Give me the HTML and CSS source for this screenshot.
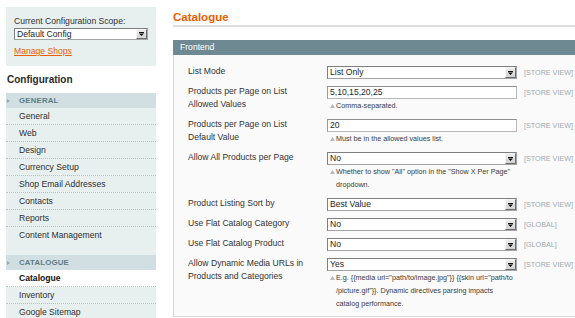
FILE: index.html
```html
<!DOCTYPE html>
<html>
<head>
<meta charset="utf-8">
<link rel="stylesheet" href="styles.css">
</head>
<body>
<div class="page">
  <aside class="side">
    <div class="scope-box">
      <div class="scope-label">Current Configuration Scope:</div>
      <div class="select side-select"><span class="sel-text">Default Config</span><span class="sel-btn"><svg width="5" height="4" viewBox="0 0 5 4"><rect x="0" y="0" width="5" height="1" fill="#111"/><path d="M0 1.5h5l-2.5 2.5z" fill="#111"/></svg></span></div>
      <a class="manage" href="#">Manage Shops</a>
    </div>
    <h3 class="side-title">Configuration</h3>
    <div class="group">
      <div class="group-head"><span class="tri"></span>GENERAL</div>
      <ul class="items">
        <li>General</li>
        <li>Web</li>
        <li>Design</li>
        <li>Currency Setup</li>
        <li>Shop Email Addresses</li>
        <li>Contacts</li>
        <li>Reports</li>
        <li>Content Management</li>
      </ul>
    </div>
    <div class="group">
      <div class="group-head"><span class="tri"></span>CATALOGUE</div>
      <ul class="items">
        <li class="active">Catalogue</li>
        <li>Inventory</li>
        <li>Google Sitemap</li>
      </ul>
    </div>
  </aside>

  <main class="main">
    <h2 class="page-title">Catalogue</h2>
    <div class="section-head">Frontend</div>
    <div class="fieldset">
      <div class="row">
        <div class="label">List Mode</div>
        <div class="value"><div class="select"><span class="sel-text">List Only</span><span class="sel-btn"><svg width="5" height="4" viewBox="0 0 5 4"><rect x="0" y="0" width="5" height="1" fill="#111"/><path d="M0 1.5h5l-2.5 2.5z" fill="#111"/></svg></span></div></div>
        <div class="scope">[STORE VIEW]</div>
      </div>
      <div class="row">
        <div class="label">Products per Page on List Allowed Values</div>
        <div class="value"><div class="input">5,10,15,20,25</div><p class="note"><svg class="ni" width="5" height="4" viewBox="0 0 5 4"><path d="M2.5 0L5 4H0z" fill="#b9b9b9"/></svg>Comma-separated.</p></div>
        <div class="scope">[STORE VIEW]</div>
      </div>
      <div class="row">
        <div class="label">Products per Page on List Default Value</div>
        <div class="value"><div class="input">20</div><p class="note"><svg class="ni" width="5" height="4" viewBox="0 0 5 4"><path d="M2.5 0L5 4H0z" fill="#b9b9b9"/></svg>Must be in the allowed values list.</p></div>
        <div class="scope">[STORE VIEW]</div>
      </div>
      <div class="row">
        <div class="label">Allow All Products per Page</div>
        <div class="value"><div class="select"><span class="sel-text">No</span><span class="sel-btn"><svg width="5" height="4" viewBox="0 0 5 4"><rect x="0" y="0" width="5" height="1" fill="#111"/><path d="M0 1.5h5l-2.5 2.5z" fill="#111"/></svg></span></div><p class="note"><svg class="ni" width="5" height="4" viewBox="0 0 5 4"><path d="M2.5 0L5 4H0z" fill="#b9b9b9"/></svg>Whether to show "All" option in the "Show X Per Page" dropdown.</p></div>
        <div class="scope">[STORE VIEW]</div>
      </div>
      <div class="row">
        <div class="label">Product Listing Sort by</div>
        <div class="value"><div class="select"><span class="sel-text">Best Value</span><span class="sel-btn"><svg width="5" height="4" viewBox="0 0 5 4"><rect x="0" y="0" width="5" height="1" fill="#111"/><path d="M0 1.5h5l-2.5 2.5z" fill="#111"/></svg></span></div></div>
        <div class="scope">[STORE VIEW]</div>
      </div>
      <div class="row">
        <div class="label">Use Flat Catalog Category</div>
        <div class="value"><div class="select"><span class="sel-text">No</span><span class="sel-btn"><svg width="5" height="4" viewBox="0 0 5 4"><rect x="0" y="0" width="5" height="1" fill="#111"/><path d="M0 1.5h5l-2.5 2.5z" fill="#111"/></svg></span></div></div>
        <div class="scope">[GLOBAL]</div>
      </div>
      <div class="row">
        <div class="label">Use Flat Catalog Product</div>
        <div class="value"><div class="select"><span class="sel-text">No</span><span class="sel-btn"><svg width="5" height="4" viewBox="0 0 5 4"><rect x="0" y="0" width="5" height="1" fill="#111"/><path d="M0 1.5h5l-2.5 2.5z" fill="#111"/></svg></span></div></div>
        <div class="scope">[GLOBAL]</div>
      </div>
      <div class="row">
        <div class="label">Allow Dynamic Media URLs in Products and Categories</div>
        <div class="value"><div class="select"><span class="sel-text">Yes</span><span class="sel-btn"><svg width="5" height="4" viewBox="0 0 5 4"><rect x="0" y="0" width="5" height="1" fill="#111"/><path d="M0 1.5h5l-2.5 2.5z" fill="#111"/></svg></span></div><p class="note"><svg class="ni" width="5" height="4" viewBox="0 0 5 4"><path d="M2.5 0L5 4H0z" fill="#b9b9b9"/></svg>E.g. {{media url="path/to/image.jpg"}} {{skin url="path/to<wbr>/picture.gif"}}. Dynamic directives parsing impacts catalog performance.</p></div>
        <div class="scope">[STORE VIEW]</div>
      </div>
    </div>
  </main>
</div>
</body>
</html>
```

FILE: styles.css
```css
* { box-sizing: border-box; }
html, body { margin: 0; padding: 0; }
body {
  width: 575px;
  height: 318px;
  overflow: hidden;
  background: #fff;
  font-family: "Liberation Sans", Arial, sans-serif;
  font-size: 8.6px;
  color: #2f2f2f;
}
.page {
  display: flex;
  gap: 17px;
  padding: 7px 0 0 6px;
  width: max-content;
}

/* sidebar */
.side {
  width: 150px;
  flex: none;
}
.scope-box {
  background: #e7efef;
  padding: 9px 8px 9px 8px;
  height: 59px;
}
.scope-label {
  line-height: 11px;
  color: #333;
}
.select {
  display: flex;
  align-items: center;
  height: 13px;
  background: #fff;
  border: 1px solid #a3a3a3;
  border-top-color: #7f7f7f;
  border-left-color: #7f7f7f;
  padding: 0 0 0 2px;
  color: #1e1e1e;
}
.side-select {
  margin-top: 1px;
  height: 12px;
  width: 134px;
}
.sel-text {
  flex: 1;
  line-height: 11px;
  white-space: nowrap;
  overflow: hidden;
}
.sel-btn {
  flex: none;
  width: 11px;
  height: 11px;
  display: flex;
  align-items: center;
  justify-content: center;
  background: linear-gradient(#ececec, #d2d2d2);
  border: 1px solid #f4f4f4;
  border-right-color: #6e6e6e;
  border-bottom-color: #6e6e6e;
}
.side-select .sel-btn { height: 10px; }
.manage {
  display: block;
  margin-top: 6px;
  line-height: 11px;
  color: #eb5e00;
  text-decoration: underline;
}
.side-title {
  margin: 0;
  background: #fff;
  height: 27px;
  padding: 8px 0 0 1px;
  font-size: 10px;
  line-height: 12px;
  font-weight: bold;
  color: #2a2a2a;
}
.group { background: #e7efef; }
.group-head {
  display: flex;
  align-items: center;
  height: 15px;
  background: #d1dfe2;
  padding-left: 1px;
  font-size: 7.8px;
  font-weight: bold;
  color: #5e7c86;
  letter-spacing: 0.2px;
}
.tri {
  width: 0;
  height: 0;
  border-top: 2.5px solid transparent;
  border-bottom: 2.5px solid transparent;
  border-left: 3px solid #90a9b0;
  margin-right: 9px;
}
.items {
  list-style: none;
  margin: 0;
  padding: 0 0 11px 0;
}
.items li {
  height: 17px;
  line-height: 16px;
  padding-left: 13px;
  border-bottom: 1px dotted #b4c2c5;
  color: #2f2f2f;
}
.items li:last-child { border-bottom: none; }
.items li.active {
  background: #fff;
  font-weight: bold;
  color: #111;
}

/* main */
.main {
  width: 420px;
  flex: none;
}
.page-title {
  margin: 0;
  padding: 3px 0 1px 0;
  font-size: 11.5px;
  line-height: 14px;
  font-weight: bold;
  color: #eb5e00;
  border-bottom: 2px solid #dedede;
}
.section-head {
  margin-top: 13px;
  height: 15px;
  line-height: 15px;
  padding-left: 7px;
  background: #6f8992;
  color: #fff;
}
.fieldset {
  background: #fafafa;
  border: 1px solid #d6d6d6;
  border-top: none;
  padding: 10px 0 0 14px;
}
.row {
  display: grid;
  grid-template-columns: 130px 199px auto;
  padding-bottom: 6px;
}
.label {
  line-height: 13px;
  color: #333;
  padding-right: 4px;
}
.value {
  margin-left: 9px;
  width: 190px;
}
.value .select, .value .input { margin-top: 1px; }
.input {
  height: 13px;
  line-height: 11px;
  padding-left: 2px;
  background: #fff;
  border: 1px solid #b8b8b8;
  border-top-color: #8f8f8f;
  border-left-color: #9a9a9a;
  color: #1e1e1e;
}
.value .select { width: 190px; }
.scope {
  margin-left: 7px;
  line-height: 13px;
  padding-top: 1px;
  font-size: 7.2px;
  color: #a0a9ae;
  white-space: nowrap;
}
.note {
  margin: 0;
  font-size: 7.2px;
  line-height: 13px;
  color: #3a3a3a;
  padding-left: 9px;
  text-indent: -6px;
  padding-right: 2px;
}
.ni {
  margin-right: 1px;
  vertical-align: 0;
}
```
